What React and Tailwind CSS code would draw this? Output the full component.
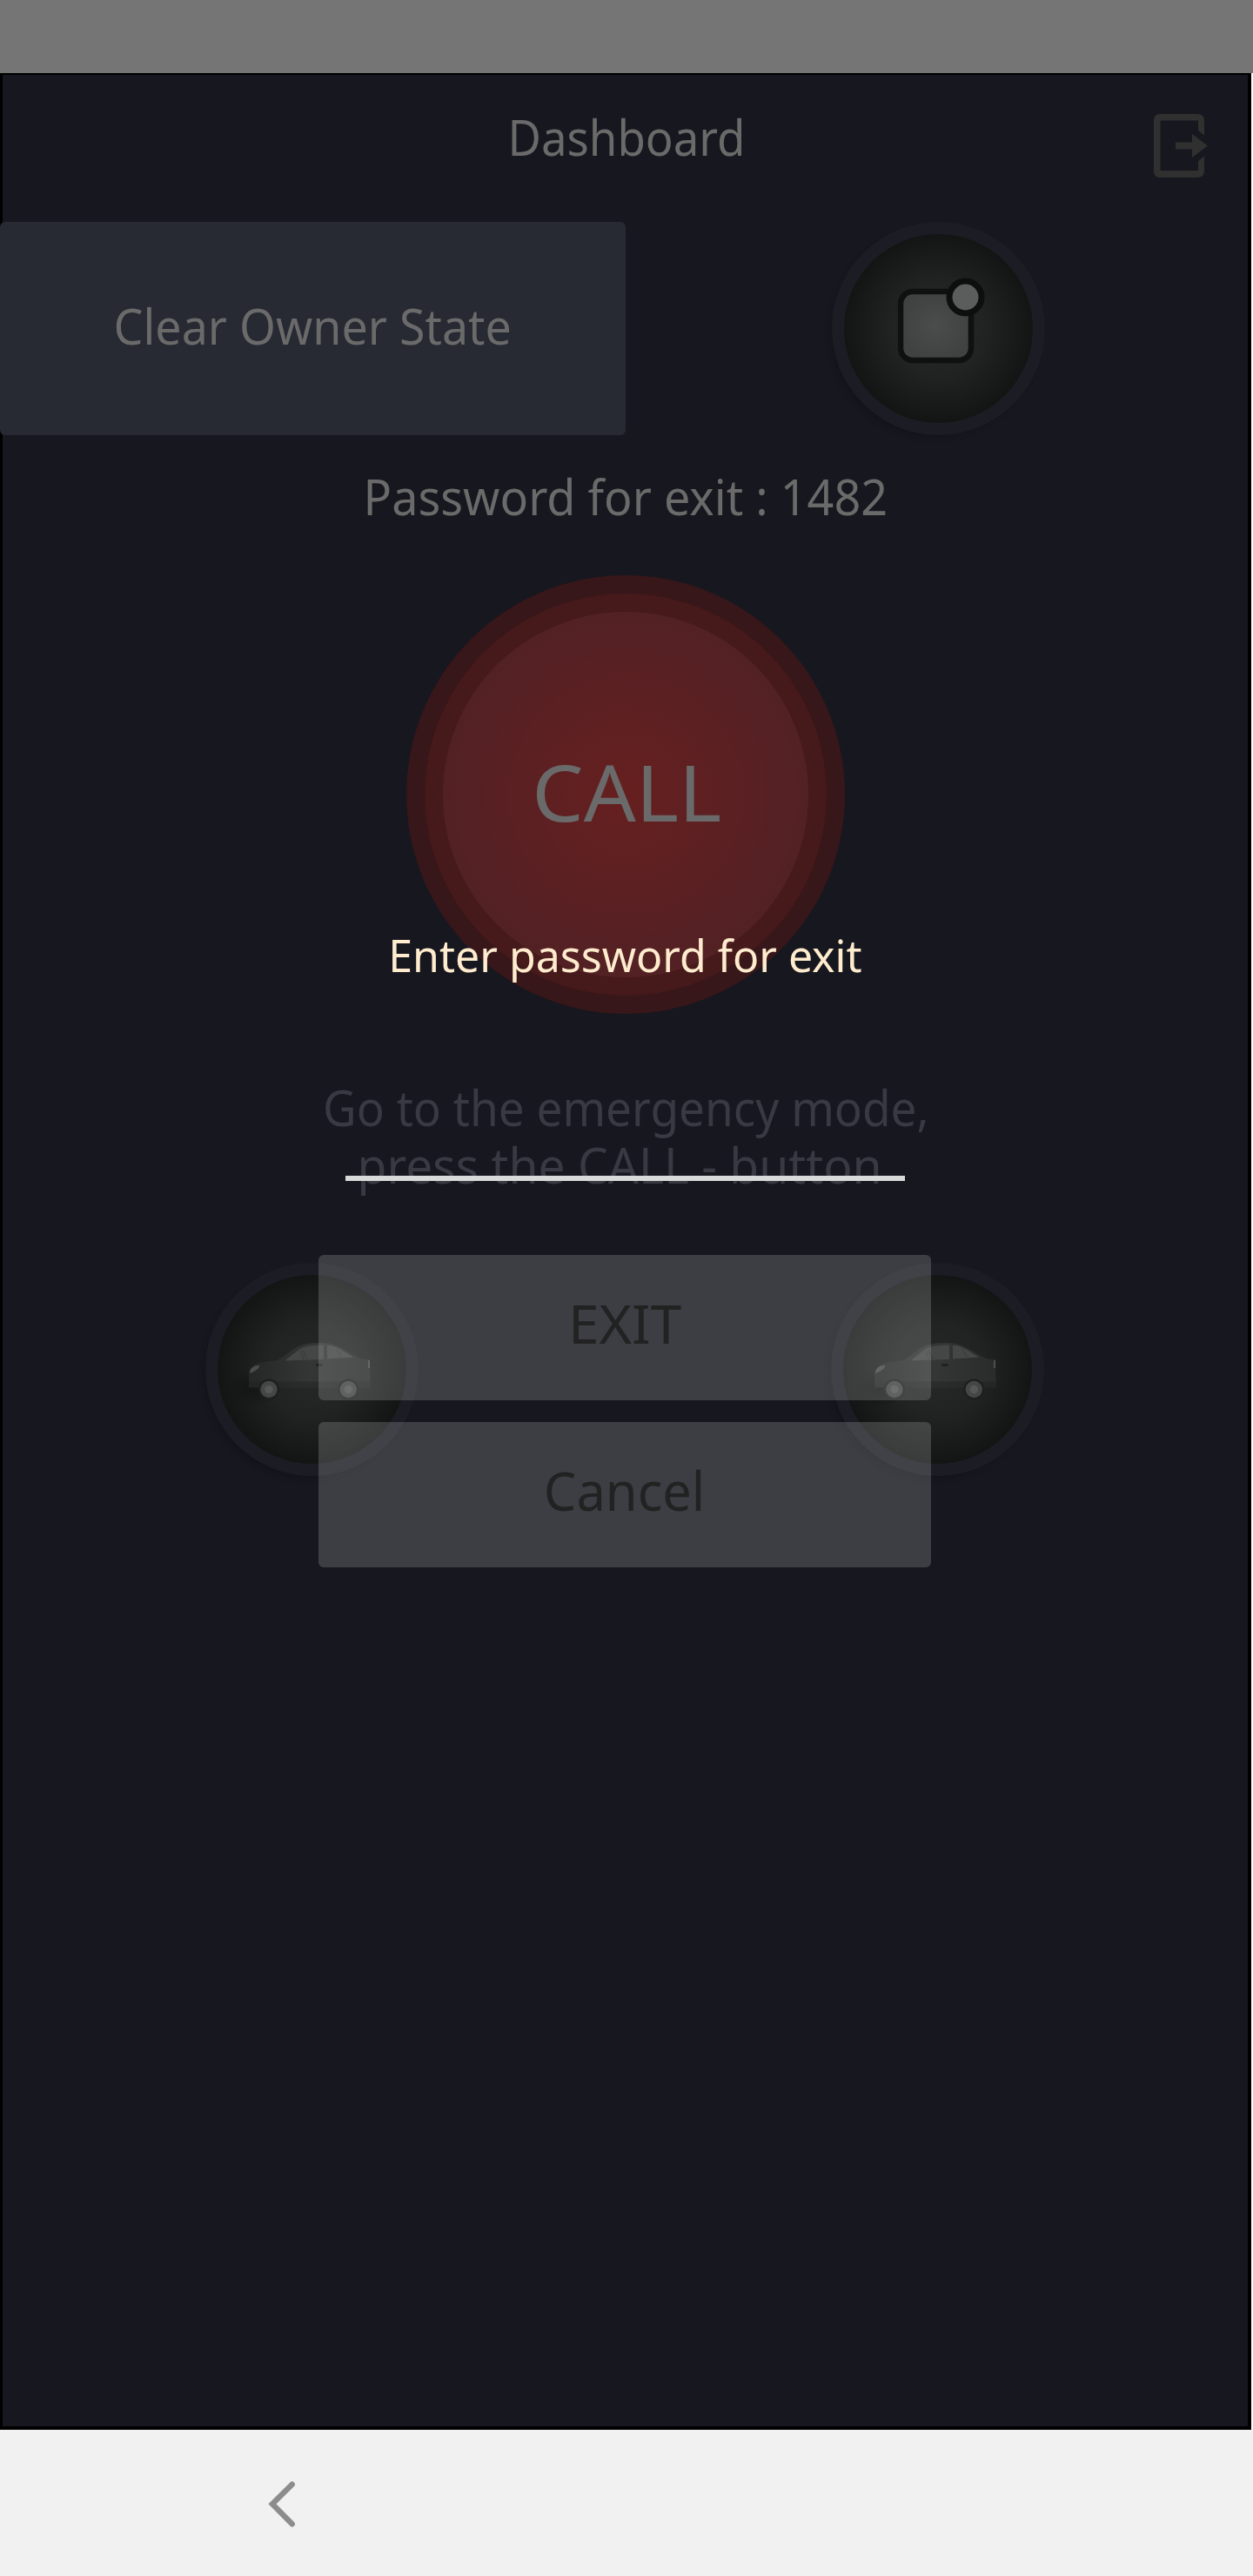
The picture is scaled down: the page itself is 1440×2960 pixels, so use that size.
import React from "react";

function Label({ children, className }) {
  return (
    <span className={"inline-block whitespace-nowrap leading-none " + className}>
      {children}
    </span>
  );
}

function RoundButton({ children }) {
  return (
    <div className="flex h-[245px] w-[245px] shrink-0 items-center justify-center rounded-full bg-[#1c1c25] shadow-[-5px_6px_8px_-5px_rgba(0,0,0,0.25)]">
      <div className="flex h-[217px] w-[217px] items-center justify-center rounded-full bg-[radial-gradient(circle_closest-side,#272928_0%,#212322_50%,#131514_100%)]">
        {children}
      </div>
    </div>
  );
}

function Car() {
  return (
    <svg className="h-[217px] w-[217px]" viewBox="0 0 217 217">
      <defs>
        <linearGradient id="carBody" x1="0" x2="1">
          <stop offset="0" stopColor="#252726" />
          <stop offset="0.5" stopColor="#343635" />
          <stop offset="1" stopColor="#2a2c2b" />
        </linearGradient>
        <linearGradient id="carSill" x1="0" x2="1">
          <stop offset="0" stopColor="#222423" />
          <stop offset="0.5" stopColor="#2b2d2c" />
          <stop offset="1" stopColor="#242625" />
        </linearGradient>
        <radialGradient id="carShade">
          <stop offset="0" stopColor="#0d0f0e" stopOpacity="0.6" />
          <stop offset="1" stopColor="#0d0f0e" stopOpacity="0" />
        </radialGradient>
      </defs>
      <ellipse cx="42" cy="130" rx="30" ry="22" fill="url(#carShade)" />
      <path
        d="M36 129 V113 C37 106 42 101.500 50 100.500 L69 98 C76 94 80 90 85 87 C92 82 97 80 102 79.500 C112 77.500 123 77.500 133 80 C142 83 154 91 165 96.500 L175 97.500 L175.500 129 Z"
        fill="url(#carBody)"
      />
      <path d="M36 122.500 H175.500 V129.500 H36 Z" fill="url(#carSill)" />
      <path d="M77.500 98.500 C84 93 89 89 95 85 C102 81.500 110 80.500 122 80.500 V97 Z" fill="#454746" />
      <path d="M126 81 C134 81 138 83.500 143 86.500 L156 94.500 L126 96.500 Z" fill="#454746" />
      <path d="M95 87 L99 97 M98 86 L103 97 M137 85 L142 94" stroke="#3e403f" strokeWidth="2" />
      <path d="M37 113 C37 107 42 103.500 48.500 104 C47 109 42 111 37 113 Z" fill="#4b4d4c" />
      <path d="M173 98 H175 V107 H173 Z" fill="#4d4f4e" />
      <rect x="113" y="102" width="8" height="3" rx="1.500" fill="#202221" />
      {[59, 150.3].map((x) => (
        <g key={x}>
          <circle cx={x} cy="131.500" r="12" fill="#1d1f1e" />
          <circle cx={x} cy="131.500" r="9.700" fill="#454746" />
          <circle cx={x} cy="131.500" r="4.700" fill="#565857" />
        </g>
      ))}
    </svg>
  );
}

function AppBadgeIcon() {
  return (
    <svg className="h-[217px] w-[217px]" viewBox="0 0 217 217">
      <defs>
        <radialGradient id="tile">
          <stop offset="0" stopColor="#4b4d4c" />
          <stop offset="1" stopColor="#404241" />
        </radialGradient>
      </defs>
      <rect x="65" y="66" width="81" height="79" rx="14" fill="url(#tile)" stroke="#0f1110" strokeWidth="6.500" />
      <circle cx="139.500" cy="72.500" r="18.500" fill="#5b5d5c" stroke="#0d0f0e" strokeWidth="7" />
    </svg>
  );
}

function Dashboard() {
  return (
    <div className="flex h-[2708px] w-[1438px] flex-col border-t-2 border-r-4 border-b-4 border-l-[3px] border-black bg-[#17171f]">
      <header className="-ml-[3px] flex h-[169px] w-[1438px] items-start">
        <div className="w-[142px]" />
        <div className="flex flex-1 justify-center pt-[43px]">
          <Label className="scale-x-[0.942] text-[56px] text-[#6a6a6a]">Dashboard</Label>
        </div>
        <svg className="mt-[35px] h-[90px] w-[140px]" viewBox="0 0 140 90">
          <path
            d="M35 10 H78 Q86 10 86 18 V34.500 L79 29 V17.500 H35.500 V75 H79 V64 L86 58.500 V75 Q86 83 78 83 H35 Q28 83 28 75 V18 Q28 10 35 10 Z"
            fill="#303030"
          />
          <path d="M53 42.500 H72 V33 L90 46.500 L72 60 V50.500 H53 Z" fill="#303030" />
        </svg>
      </header>

      <div className="-ml-[3px] flex w-[1438px]">
        <div className="flex h-[245px] w-[719px] items-center justify-center rounded-md bg-[#272933] pb-[7px]">
          <Label className="scale-x-[0.96] text-[56px] text-[#6a6a6a]">Clear Owner State</Label>
        </div>
        <div className="flex flex-1 justify-center">
          <RoundButton>
            <AppBadgeIcon />
          </RoundButton>
        </div>
      </div>

      <div className="-ml-[3px] flex h-[161px] w-[1438px] justify-center pt-[42px]">
        <Label className="scale-x-[0.963] text-[56px] text-[#6a6a6a]">Password for exit : 1482</Label>
      </div>

      <div className="-ml-[3px] flex w-[1438px] justify-center">
        <div className="flex h-[504px] w-[504px] items-center justify-center rounded-full bg-[#371719]">
          <div className="flex h-[462px] w-[462px] items-center justify-center rounded-full bg-[#46191b]">
            <div className="flex h-[420px] w-[420px] items-center justify-center rounded-full bg-[radial-gradient(circle_closest-side,#661f1f_0%,#5e2022_45%,#522124_100%)] pb-[8px] pl-[2px]">
              <Label className="scale-x-[1.045] text-[90px] text-[#6a6a6a]">CALL</Label>
            </div>
          </div>
        </div>
      </div>

      <div className="-ml-[3px] flex h-[286px] w-[1438px] flex-col items-center pt-[79px] text-[56px] text-[#393943]">
        <Label className="h-[66px] scale-x-[0.948] leading-[66px]">Go to the emergency mode,</Label>
        <Label className="mr-[14px] h-[66px] scale-x-[0.985] leading-[66px]">press the CALL - button</Label>
      </div>

      <div className="-ml-[4px] flex w-[1438px]">
        <div className="flex flex-1 justify-center">
          <RoundButton>
            <Car />
          </RoundButton>
        </div>
        <div className="flex flex-1 justify-center">
          <RoundButton>
            <Car />
          </RoundButton>
        </div>
      </div>
    </div>
  );
}

function ExitDialog() {
  return (
    <div className="absolute top-[1072px] left-[366px] flex w-[704px] flex-col items-center">
      <Label className="h-[60px] scale-x-[0.981] text-[51px] leading-[52px] text-[#ffebcd]">
        Enter password for exit
      </Label>
      <div className="h-[225px] w-[643px] border-b-[6px] border-[#d9d9d9]" />
      <button className="mt-[85px] flex h-[167px] w-full items-center justify-center rounded-md bg-[rgba(174,179,178,0.25)] pb-[12px]">
        <Label className="scale-x-[1.03] text-[62px] text-[#222222]">EXIT</Label>
      </button>
      <button className="mt-[25px] flex h-[167px] w-full items-center justify-center rounded-md bg-[rgba(174,179,178,0.25)] pb-[11px]">
        <Label className="scale-x-[0.96] text-[62px] text-[#222222]">Cancel</Label>
      </button>
    </div>
  );
}

export default function App() {
  return (
    <div className="relative h-[2960px] w-[1440px] overflow-hidden bg-white font-['Noto_Sans',sans-serif]">
      <div className="h-[84px] w-full bg-[#757575]" />
      <Dashboard />
      <nav className="h-[168px] w-full bg-[#f1f1f1] pt-[50px] pl-[284px]">
        <svg className="h-[72px] w-[72px]" viewBox="0 0 72 72">
          <path
            d="M51.700 12.700 L29 35.300 L51.700 58.200"
            fill="none"
            stroke="#8c8c8c"
            strokeWidth="6.500"
            strokeLinecap="round"
            strokeLinejoin="miter"
          />
        </svg>
      </nav>
      <ExitDialog />
    </div>
  );
}
